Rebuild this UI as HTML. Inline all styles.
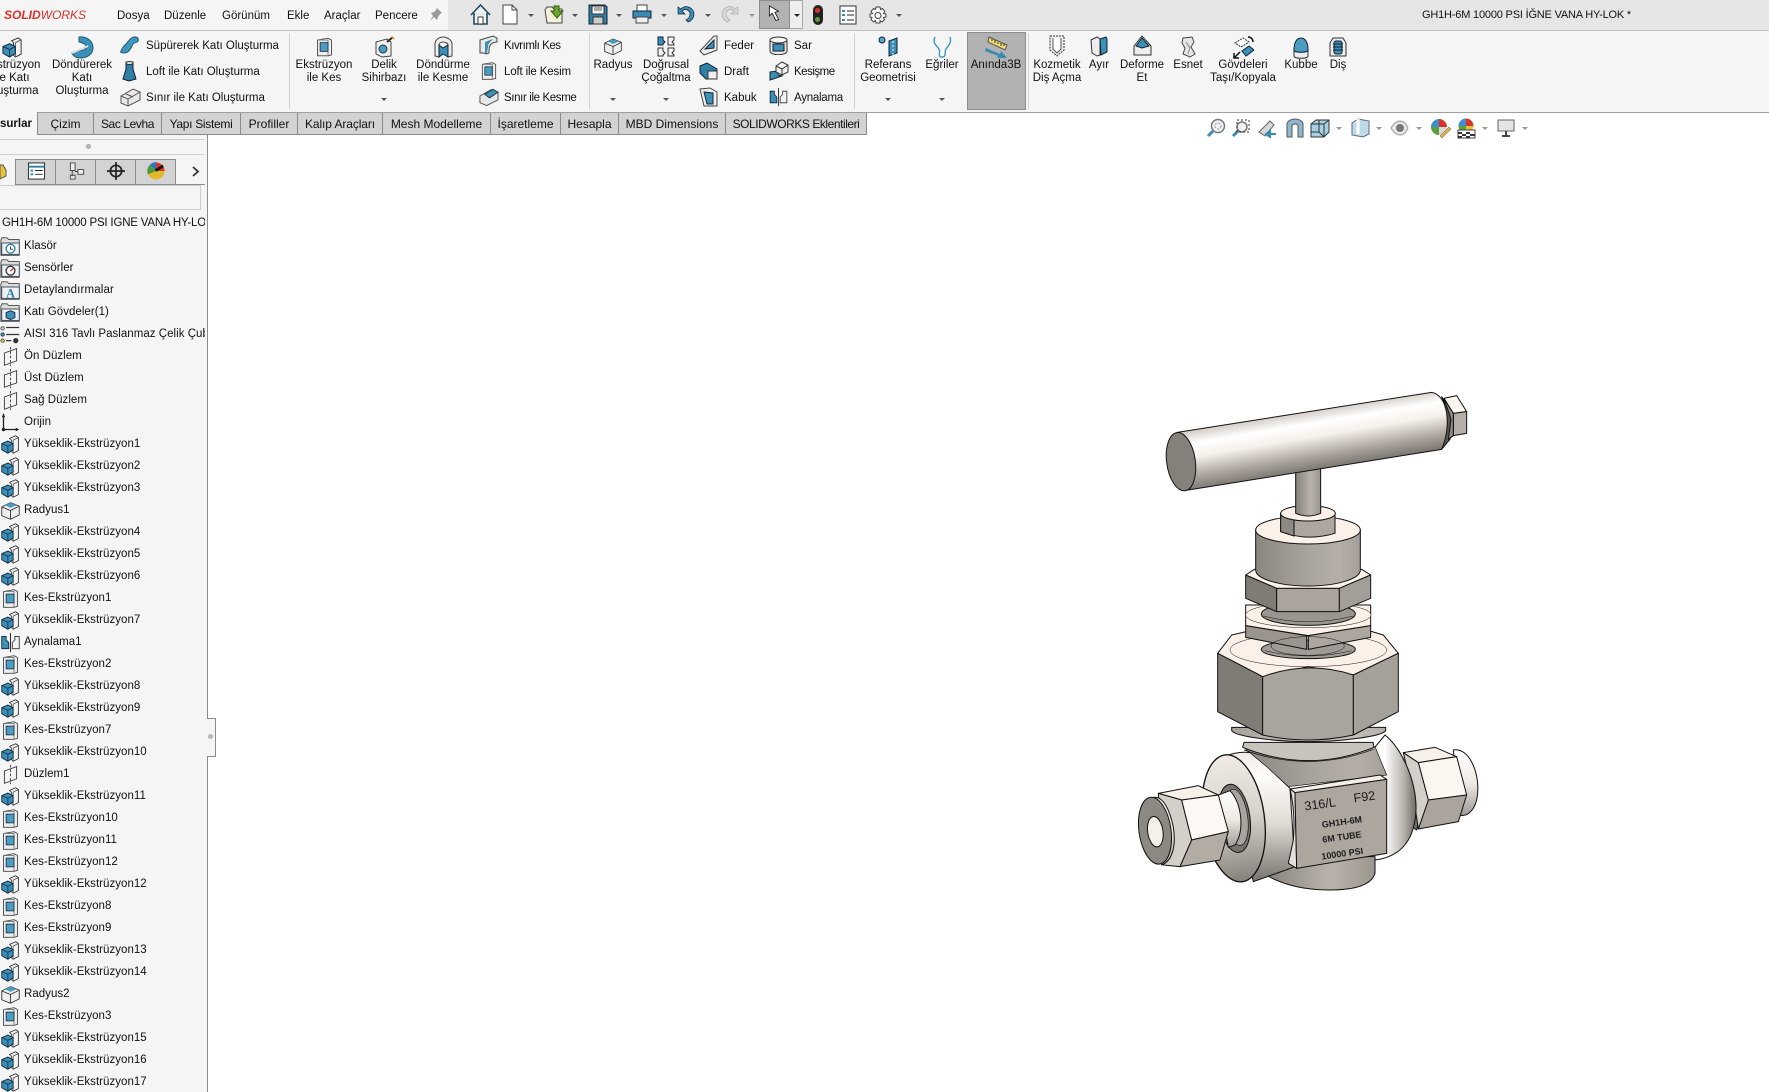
<!DOCTYPE html>
<html lang="tr"><head><meta charset="utf-8"><title>SOLIDWORKS</title>
<style>
html,body{margin:0;padding:0;background:#fff}
#p{position:relative;width:1769px;height:1092px;overflow:hidden;background:#fff;font:11.5px/13px "Liberation Sans",sans-serif;color:#111}
#p div,#p svg.a{position:absolute}
.c{transform:translateX(-50%);text-align:center;white-space:nowrap;margin-top:1px}
.l{white-space:nowrap;margin-top:1px}
.s{width:1px;background:#d2d2d2;top:33px;height:76px}
.t{top:113px;height:21px;background:#d3d3d3;border-right:1px solid #8c8c8c;font-size:12px;line-height:23px;text-align:center;white-space:nowrap;box-sizing:content-box}
.ar{width:0;height:0;border-left:3px solid transparent;border-right:3px solid transparent;border-top:3px solid #555}
.arg{border-top-color:#999}
#tree{left:0;top:235px;width:205px;height:857px;overflow:hidden}
#tree p{margin:0;height:22px;line-height:22px;white-space:nowrap;display:flex;align-items:center;letter-spacing:.03px}
#tree svg{width:21px;height:21px;flex:none;margin-right:3px}
.k{top:159px;height:25px;background:#d3d3d3;border-right:1px solid #8c8c8c;width:39px}
</style></head><body>
<svg width="0" height="0" style="position:absolute"><defs>
<symbol id="boss" viewBox="0 0 24 24"><path d="M11 5l7-3 3 2v15l-6 3-2-2V7z" fill="#f2f2f2" stroke="#333"/><path d="M15 7l6-3M15 7v15" fill="none" stroke="#555"/><path d="M2 11l7-3 6 3v7l-6 4-7-4z" fill="#3c8fb6" stroke="#123"/><path d="M2 11l7 3 6-3M9 14v8" fill="none" stroke="#135"/></symbol>
<symbol id="cut" viewBox="0 0 24 24"><path d="M4 4l12-2 4 2v17l-4 1H4z" fill="#eee" stroke="#444"/><path d="M4 4h12v18" fill="none" stroke="#777"/><rect x="7" y="7" width="9" height="10" fill="#4a9cc0" stroke="#234"/></symbol>
<symbol id="plane" viewBox="0 0 24 24"><path d="M5 8l14-5v14L5 22z" fill="none" stroke="#333"/><path d="M12 1v22" fill="none" stroke="#333" stroke-dasharray="3 2"/></symbol>
<symbol id="fil" viewBox="0 0 24 24"><path d="M2 8l10-5 10 4v10l-10 5-10-4z" fill="#eee" stroke="#333"/><path d="M2 8l10 4 10-5M12 12v10" fill="none" stroke="#333"/><path d="M6 6l6-3 7 3-7 3z" fill="#4a9cc0"/></symbol>
<symbol id="mir" viewBox="0 0 24 24"><path d="M2 5h5v4l3 3v7H2z" fill="#3c8fb6" stroke="#123"/><path d="M22 5h-5v4l-3 3v7h8z" fill="#f2f2f2" stroke="#333"/><path d="M12 1v22" stroke="#111"/></symbol>
<symbol id="f" viewBox="0 0 24 24"><path d="M1 22V5l1-3h6l2 2h12v18z" fill="#dcdcdc" stroke="#444"/><rect x="2" y="8" width="20" height="13" fill="#eef2f5" stroke="#345"/></symbol>
<symbol id="arrowc" viewBox="0 0 24 24"><path d="M7 2l10 6 0 0-4 1 4 8-3 1-4-8-3 3z" fill="#fff" stroke="#222"/></symbol>
</defs></svg>
<div id="p">
<!-- title bar -->
<div style="left:0;top:0;width:1769px;height:30px;background:#e6e6e6"></div>
<div style="left:0;top:0;width:448px;height:30px;background:#f5f5f5"></div>
<div style="left:0;top:30px;width:1769px;height:1px;background:#c4c4c4"></div>
<div class="l" style="left:4px;top:7px;font:italic 12px/14px 'Liberation Sans',sans-serif;color:#d8322a"><b>SOLID</b>WORKS</div>
<div class="l" style="left:117px;top:9px">Dosya</div><div class="l" style="left:164px;top:9px">Düzenle</div><div class="l" style="left:222px;top:9px">Görünüm</div><div class="l" style="left:287px;top:9px">Ekle</div><div class="l" style="left:324px;top:9px">Araçlar</div><div class="l" style="left:375px;top:9px">Pencere</div>
<svg class="a" style="left:428px;top:7px" width="15" height="15" viewBox="0 0 15 15"><path d="M9 1l5 5-2 1-2 3-1 3-3-3-4 4 3-5-2-3 3-1 2-2z" fill="#9a9a9a"/></svg>
<svg class="a" style="left:470px;top:3px" width="21" height="23" viewBox="0 0 21 23"><path d="M1 12L10.500 2 20 12M4 10v11h13V10" fill="#eef3f6" stroke="#1c4a60" stroke-width="1.600"/><rect x="8" y="14" width="5" height="7" fill="#fff" stroke="#333"/></svg>
<svg class="a" style="left:502px;top:4px" width="16" height="21" viewBox="0 0 16 21"><path d="M1 1h9l5 5v14H1z" fill="#fff" stroke="#444"/><path d="M10 1v5h5" fill="none" stroke="#444"/></svg>
<div class="ar" style="left:528px;top:14px"></div>
<svg class="a" style="left:544px;top:4px" width="21" height="21" viewBox="0 0 21 21"><path d="M1 6l2-3h5l2 2h8v14H3z" fill="#f4f0dc" stroke="#444"/><path d="M10 2h5v5h4l-6 7-6-7h3z" fill="#6aa52d" stroke="#2e5a10"/></svg>
<div class="ar" style="left:572px;top:14px"></div>
<svg class="a" style="left:588px;top:4px" width="20" height="21" viewBox="0 0 20 21"><path d="M1 1h16l2 2v17H1z" fill="#2f7fa6" stroke="#123"/><rect x="4" y="2" width="12" height="8" fill="#f4f4f4" stroke="#333"/><path d="M6 4h8M6 6h8" stroke="#666"/><rect x="5" y="13" width="10" height="7" fill="#ccc" stroke="#333"/></svg>
<div class="ar" style="left:616px;top:14px"></div>
<svg class="a" style="left:632px;top:4px" width="20" height="20" viewBox="0 0 20 20"><rect x="5" y="1" width="10" height="6" fill="#fff" stroke="#444"/><rect x="1" y="7" width="18" height="7" fill="#3a8cb4" stroke="#123"/><rect x="4" y="13" width="12" height="6" fill="#eee" stroke="#444"/></svg>
<div class="ar" style="left:661px;top:14px"></div>
<svg class="a" style="left:677px;top:5px" width="18" height="18" viewBox="0 0 18 18"><path d="M1 2v7h7L5 6c3-3 8-1 8 3 0 3-2 5-4 6l2 2c4-1 6-5 6-8 0-6-8-10-13-5z" fill="#3a8cb4" stroke="#123" stroke-width=".7"/></svg>
<div class="ar" style="left:705px;top:14px"></div>
<svg class="a" style="left:721px;top:5px;transform:scaleX(-1)" width="18" height="18" viewBox="0 0 18 18"><path d="M1 2v7h7L5 6c3-3 8-1 8 3 0 3-2 5-4 6l2 2c4-1 6-5 6-8 0-6-8-10-13-5z" fill="#d8d8d8" stroke="#aaa" stroke-width=".7"/></svg>
<div class="ar arg" style="left:749px;top:14px"></div>
<div style="left:759px;top:0;width:31px;height:29px;background:#b2b2b2;border:1px solid #8c8c8c;box-sizing:border-box"></div>
<div style="left:790px;top:0;width:13px;height:29px;background:#eee;border:1px solid #a8a8a8;border-left:0;box-sizing:border-box"></div>
<svg class="a" style="left:763px;top:3px" width="22" height="24" viewBox="0 0 24 24"><use href="#arrowc"/></svg>
<div class="ar" style="left:794px;top:14px;border-top-color:#222"></div>
<div style="left:813px;top:5px;width:10px;height:20px;border-radius:5px;background:#222"></div><div style="left:815px;top:8px;width:5px;height:5px;border-radius:3px;background:#d8342c"></div><div style="left:815px;top:17px;width:5px;height:5px;border-radius:3px;background:#5aa03a"></div>
<svg class="a" style="left:839px;top:5px" width="18" height="20" viewBox="0 0 18 20"><rect x="1" y="1" width="16" height="18" fill="#fff" stroke="#333"/><path d="M3 5h3v2H3zM3 9h3v2H3zM3 14h3v2H3z" fill="#3a8cb4"/><path d="M8 6h7M8 10h7M8 15h7" stroke="#222"/></svg>
<svg class="a" style="left:869px;top:6px" width="18" height="18" viewBox="0 0 18 18"><path d="M7 1h4l.5 2.500 2-1 2.500 3-1.500 2L17 8v3l-2.500.5 1 2-2.500 2.500-2-1.500L11 17H7l-.5-2.500-2 1.500L2 13.500l1-2L1 11V8l2.500-.5L2 5.500 4.500 2.500l2 1z" fill="#f5f5f5" stroke="#444"/><circle cx="9" cy="9.500" r="3" fill="#fff" stroke="#444"/></svg>
<div class="ar" style="left:896px;top:14px"></div>
<div class="l" style="left:1422px;top:8px;font-size:11px;letter-spacing:-.19px">GH1H-6M 10000 PSI İĞNE VANA HY-LOK *</div>
<!-- ribbon -->
<div style="left:0;top:31px;width:1769px;height:81px;background:#f5f5f5"></div>
<div style="left:0;top:112px;width:1769px;height:1px;background:#a0a0a0"></div>
<div class="s" style="left:289px"></div><div class="s" style="left:589px"></div><div class="s" style="left:854px"></div><div class="s" style="left:1028px"></div>
<div style="left:967px;top:32px;width:59px;height:78px;background:#b2b2b2;border:1px solid #8c8c8c;box-sizing:border-box"></div>
<svg class="a" style="left:1px;top:36px" width="23" height="23" viewBox="0 0 24 24"><use href="#boss"/></svg>
<div class="c" style="left:12px;top:58px">Ekstrüzyon<br>ile Katı<br>Oluşturma</div>
<svg class="a" style="left:71px;top:35px" width="23" height="24" viewBox="0 0 23 24"><path d="M8 2c8-1 14 4 14 11 0 6-6 10-12 10-5 0-8-2-9-5l9-3c3 1 5-1 5-3 0-3-3-4-7-5z" fill="#3c8fb6" stroke="#1c5a78"/><path d="M1 18l16-7" stroke="#ddd" stroke-width="2"/></svg>
<div class="c" style="left:82px;top:58px">Döndürerek<br>Katı<br>Oluşturma</div>
<svg class="a" style="left:119px;top:35px" width="21" height="20" viewBox="0 0 21 20"><path d="M2 16c2-5 4-6 6-8 2-3 5-7 9-6 3 1 3 4 1 5-3 1-4 1-5 4-2 4-4 7-8 7-3 0-4-1-3-2z" fill="#3f97bf" stroke="#1c5a78"/></svg>
<svg class="a" style="left:122px;top:61px" width="15" height="21" viewBox="0 0 15 21"><path d="M4 1h7l0 7 3 10-7 2-6-2 3-10z" fill="#2f7fa6" stroke="#123"/><ellipse cx="7.500" cy="2" rx="3.500" ry="1.500" fill="#eee" stroke="#333"/></svg>
<svg class="a" style="left:120px;top:87px" width="21" height="20" viewBox="0 0 21 20"><path d="M1 9l12-7 7 3v8L8 19l-7-3z" fill="#e8e8e8" stroke="#555"/><path d="M1 9l7 3 12-7M8 12v7M6 7l7 3" fill="none" stroke="#555"/></svg>
<div class="l" style="left:146px;top:39px">Süpürerek Katı Oluşturma</div><div class="l" style="left:146px;top:65px">Loft ile Katı Oluşturma</div><div class="l" style="left:146px;top:91px">Sınır ile Katı Oluşturma</div>
<svg class="a" style="left:314px;top:36px" width="21" height="22" viewBox="0 0 24 24"><use href="#cut"/></svg>
<div class="c" style="left:324px;top:58px">Ekstrüzyon<br>ile Kes</div>
<svg class="a" style="left:373px;top:36px" width="22" height="22" viewBox="0 0 22 22"><path d="M3 6l11-3 4 3v14l-9 1-6-3z" fill="#f0f0f0" stroke="#444"/><circle cx="10" cy="13" r="4" fill="#4a9cc0" stroke="#234"/><path d="M14 6l6-5" stroke="#222" stroke-width="2"/><path d="M19 1l2 2" stroke="#e0a020" stroke-width="2"/></svg>
<div class="c" style="left:384px;top:58px">Delik<br>Sihirbazı</div>
<div class="ar" style="left:381px;top:98px"></div>
<svg class="a" style="left:433px;top:36px" width="21" height="22" viewBox="0 0 21 22"><path d="M2 20V8c0-4 4-7 8-7s9 3 9 7v12l-4 1V9c0-2-3-3-5-3S6 7 6 9v12z" fill="#eee" stroke="#444"/><path d="M6 9l4 3 5-3v12l-5-3-4 3z" fill="#3c8fb6" stroke="#123"/></svg>
<div class="c" style="left:443px;top:58px">Döndürme<br>ile Kesme</div>
<svg class="a" style="left:479px;top:35px" width="20" height="20" viewBox="0 0 20 20"><path d="M1 18V5L14 1l4 2v4c-5 0-8 3-8 8v3l-3 1-2-1z" fill="#e8e8e8" stroke="#444"/><path d="M6 18V7l8-3c-3 3-5 5-5 8l-1 6z" fill="#3c8fb6"/></svg>
<svg class="a" style="left:479px;top:61px" width="20" height="20" viewBox="0 0 24 24"><use href="#cut"/></svg>
<svg class="a" style="left:479px;top:87px" width="20" height="20" viewBox="0 0 21 20"><path d="M1 9l12-7 7 3v8L8 19l-7-3z" fill="#e8e8e8" stroke="#555"/><path d="M6 7l9-5 5 3-9 6z" fill="#3c8fb6" stroke="#234"/></svg>
<div class="l" style="left:504px;top:39px;letter-spacing:-.45px">Kıvrımlı Kes</div><div class="l" style="left:504px;top:65px;letter-spacing:-.15px">Loft ile Kesim</div><div class="l" style="left:504px;top:91px;letter-spacing:-.37px">Sınır ile Kesme</div>
<svg class="a" style="left:603px;top:36px" width="20" height="21" viewBox="0 0 24 24"><use href="#fil"/></svg>
<div class="c" style="left:613px;top:58px">Radyus</div><div class="ar" style="left:610px;top:98px"></div>
<svg class="a" style="left:657px;top:36px" width="19" height="21" viewBox="0 0 19 21"><path d="M1 1h5v3l2 2-2 2v1H1z" fill="#3c8fb6" stroke="#123"/><path d="M11 1h6v3l-2 2 2 2v1h-6zM1 12h5v3l2 2-2 2v1H1zM11 12h6v3l-2 2 2 2v1h-6z" fill="#f4f4f4" stroke="#333"/></svg>
<div class="c" style="left:666px;top:58px">Doğrusal<br>Çoğaltma</div><div class="ar" style="left:663px;top:98px"></div>
<svg class="a" style="left:699px;top:35px" width="19" height="21" viewBox="0 0 19 21"><path d="M1 16L15 1h3v14L5 20z" fill="#eee" stroke="#444"/><path d="M6 14l9-9v8z" fill="#3c8fb6" stroke="#123"/></svg>
<svg class="a" style="left:699px;top:61px" width="19" height="20" viewBox="0 0 19 20"><path d="M1 5l7-3 10 6v10H7L1 12z" fill="#2f7fa6" stroke="#123"/><rect x="9" y="10" width="9" height="8" fill="#eee" stroke="#333"/></svg>
<svg class="a" style="left:699px;top:87px" width="19" height="20" viewBox="0 0 19 20"><path d="M1 2l10-1 7 4v14H5z" fill="#eee" stroke="#444"/><path d="M5 5l9 1v11H8z" fill="#3c8fb6" stroke="#123"/></svg>
<div class="l" style="left:724px;top:39px">Feder</div><div class="l" style="left:724px;top:65px">Draft</div><div class="l" style="left:724px;top:91px">Kabuk</div>
<svg class="a" style="left:769px;top:36px" width="19" height="19" viewBox="0 0 19 19"><path d="M1 4v11c0 5 17 5 17 0V4z" fill="#e8e8e8" stroke="#333"/><ellipse cx="9.500" cy="4" rx="8.500" ry="3" fill="#f6f6f6" stroke="#333"/><rect x="4" y="8" width="11" height="7" fill="#3c8fb6" stroke="#123"/></svg>
<svg class="a" style="left:769px;top:61px" width="20" height="20" viewBox="0 0 20 20"><path d="M1 11l8-1v4l4 1-12 4z" fill="#3c8fb6" stroke="#123"/><path d="M7 5l6-4 6 3v7l-6 3-6-3z" fill="#f2f2f2" stroke="#333"/><path d="M7 5l6 3 6-4M13 8v6" fill="none" stroke="#333"/></svg>
<svg class="a" style="left:768px;top:87px" width="21" height="20" viewBox="0 0 24 24"><use href="#mir"/></svg>
<div class="l" style="left:794px;top:39px">Sar</div><div class="l" style="left:794px;top:65px;letter-spacing:-.5px">Kesişme</div><div class="l" style="left:794px;top:91px;letter-spacing:-.25px">Aynalama</div>
<svg class="a" style="left:878px;top:36px" width="21" height="22" viewBox="0 0 21 22"><circle cx="4" cy="4" r="3" fill="#5aa8cc" stroke="#123"/><path d="M11 5l8-3v15l-8 3z" fill="#3c8fb6" stroke="#123"/><path d="M15 1v21" stroke="#fff" stroke-dasharray="2 2"/></svg>
<div class="c" style="left:888px;top:58px">Referans<br>Geometrisi</div><div class="ar" style="left:885px;top:98px"></div>
<svg class="a" style="left:932px;top:36px" width="21" height="22" viewBox="0 0 21 22"><path d="M3 1c-3 6 2 9 4 12s-2 8 3 8 2-5 4-8 6-6 4-12" fill="none" stroke="#3f97bf" stroke-width="1.400"/></svg>
<div class="c" style="left:942px;top:58px">Eğriler</div><div class="ar" style="left:939px;top:98px"></div>
<svg class="a" style="left:985px;top:36px" width="23" height="23" viewBox="0 0 23 23"><path d="M4 1l18 8-2 5L3 6z" fill="#f2dc6a" stroke="#555"/><path d="M7 3v2M10 4v3M13 6v2M16 7v3M19 8v2" stroke="#333"/><path d="M1 12l14 6 1-3 6 7-10 0 1-2-13-5z" fill="#3a8cb4"/></svg>
<div class="c" style="left:996px;top:58px">Anında3B</div>
<svg class="a" style="left:1048px;top:35px" width="18" height="22" viewBox="0 0 18 22"><path d="M2 1h14v14l-7 6-7-6z" fill="#eee" stroke="#333" stroke-dasharray="2 1"/><path d="M5 3v11l4 4 4-4V3" fill="#fff" stroke="#555"/></svg>
<div class="c" style="left:1057px;top:58px">Kozmetik<br>Diş Açma</div>
<svg class="a" style="left:1090px;top:36px" width="18" height="21" viewBox="0 0 18 21"><path d="M1 4l6-3 3 2v16l-3 1-5-3z" fill="#eee" stroke="#333"/><path d="M10 3l6-2 1 2v13l-6 3z" fill="#3c8fb6" stroke="#123"/></svg>
<div class="c" style="left:1099px;top:58px">Ayır</div>
<svg class="a" style="left:1133px;top:35px" width="19" height="22" viewBox="0 0 19 22"><path d="M1 11l8-10 9 10v9H1z" fill="#eee" stroke="#333"/><path d="M3 11l6-8 7 8-7 2z" fill="#3c8fb6" stroke="#123"/></svg>
<div class="c" style="left:1142px;top:58px">Deforme<br>Et</div>
<svg class="a" style="left:1180px;top:36px" width="16" height="22" viewBox="0 0 16 22"><path d="M3 2l9-1 2 5-3 5 4 7-5 3-7-3 2-6-3-5z" fill="#e6e6e6" stroke="#444"/><path d="M6 6l4 6-2 6" fill="none" stroke="#888"/></svg>
<div class="c" style="left:1188px;top:58px">Esnet</div>
<svg class="a" style="left:1232px;top:35px" width="22" height="24" viewBox="0 0 22 24"><path d="M3 8l8-5 6 4-8 5z" fill="#fff" stroke="#333" stroke-dasharray="2 1"/><path d="M10 16l7-5 5 4-8 6z" fill="#3c8fb6" stroke="#123"/><path d="M2 23l6-6M2 18v5h5M16 2c3 0 5 2 5 5" fill="none" stroke="#111" stroke-width="1.500"/></svg>
<div class="c" style="left:1243px;top:58px">Gövdeleri<br>Taşı/Kopyala</div>
<svg class="a" style="left:1293px;top:37px" width="16" height="22" viewBox="0 0 16 22"><path d="M1 12v7c0 3 14 3 14 0v-7z" fill="#eee" stroke="#333"/><path d="M1 13C1 5 4 1 8 1s7 4 7 12c0 3-14 3-14 0z" fill="#4a9cc0" stroke="#123"/></svg>
<div class="c" style="left:1301px;top:58px">Kubbe</div>
<svg class="a" style="left:1329px;top:37px" width="18" height="20" viewBox="0 0 18 20"><path d="M1 6l3-5h10l3 5v13H1z" fill="#eee" stroke="#333"/><rect x="5" y="4" width="8" height="13" rx="2" fill="#3c8fb6" stroke="#123"/><path d="M4 7h10M4 10h10M4 13h10" stroke="#123"/></svg>
<div class="c" style="left:1338px;top:58px">Diş</div>
<!-- tabs -->
<div class="t" style="left:0;width:37px;background:#f5f5f5;top:112px;height:23px;line-height:24px;text-align:right;overflow:hidden;font-weight:bold;font-size:11.5px;padding:0;border-right:1px solid #8c8c8c"><span style="margin-right:8px">surlar</span></div>
<div class="t" style="left:38px;width:55px">Çizim</div><div class="t" style="left:94px;width:67px;letter-spacing:-.4px">Sac Levha</div><div class="t" style="left:162px;width:78px;letter-spacing:-.3px">Yapı Sistemi</div><div class="t" style="left:241px;width:56px">Profiller</div><div class="t" style="left:298px;width:84px;letter-spacing:-.1px">Kalıp Araçları</div><div class="t" style="left:383px;width:107px">Mesh Modelleme</div><div class="t" style="left:491px;width:69px">İşaretleme</div><div class="t" style="left:561px;width:57px">Hesapla</div><div class="t" style="left:619px;width:106px">MBD Dimensions</div><div class="t" style="left:726px;width:140px;letter-spacing:-.45px">SOLIDWORKS Eklentileri</div>
<div style="left:38px;top:134px;width:829px;height:1px;background:#8c8c8c"></div>
<!-- heads-up -->
<svg class="a" style="left:1206px;top:118px" width="20" height="20" viewBox="0 0 20 20"><circle cx="12" cy="8" r="6.500" fill="#eef2f4" stroke="#777" stroke-width="1.500"/><path d="M7 13l-5 5" stroke="#3a8cb4" stroke-width="3"/><circle cx="12" cy="8" r="3" fill="none" stroke="#999" stroke-dasharray="2 1.500"/></svg>
<svg class="a" style="left:1231px;top:118px" width="20" height="20" viewBox="0 0 20 20"><circle cx="11" cy="9" r="5" fill="#eef2f4" stroke="#777" stroke-width="1.500"/><path d="M7 13l-5 5" stroke="#3a8cb4" stroke-width="3"/><rect x="6" y="2" width="12" height="12" fill="none" stroke="#333" stroke-dasharray="2 2"/></svg>
<svg class="a" style="left:1257px;top:118px" width="20" height="20" viewBox="0 0 20 20"><path d="M2 14L13 3l4 4-9 11z" fill="#d8d8d8" stroke="#666"/><path d="M9 16h10M9 16l4-3v6z" fill="#3a8cb4" stroke="#3a8cb4" stroke-width="2"/></svg>
<svg class="a" style="left:1285px;top:118px" width="20" height="20" viewBox="0 0 20 20"><path d="M2 19V6c0-3 4-5 8-5s8 2 8 5v13h-5V8c0-1-1-2-3-2S7 7 7 8v11z" fill="#8fb6cc" stroke="#555"/></svg>
<svg class="a" style="left:1310px;top:118px" width="20" height="20" viewBox="0 0 20 20"><path d="M1 6l5-4h13v12l-5 5H1z" fill="#a6d0e4" stroke="#333"/><path d="M1 6h13v13M14 6l5-4M9 2v12H1M9 14l5 5" fill="none" stroke="#333"/></svg>
<div class="ar arg" style="left:1336px;top:127px"></div>
<svg class="a" style="left:1351px;top:118px" width="19" height="20" viewBox="0 0 19 20"><path d="M1 5l6-4 11 2v13l-6 3-11-2z" fill="#bcdcec" stroke="#667"/><path d="M7 1v15" stroke="#fff" stroke-width="3"/></svg>
<div class="ar arg" style="left:1376px;top:127px"></div>
<svg class="a" style="left:1390px;top:119px" width="19" height="18" viewBox="0 0 19 18"><path d="M1 9c3-5 6-7 9-7s6 2 8 7c-2 5-5 7-8 7s-6-2-9-7z" fill="#e6e6e6" stroke="#999"/><circle cx="10" cy="9" r="4" fill="#777"/></svg>
<div class="ar arg" style="left:1416px;top:127px"></div>
<svg class="a" style="left:1430px;top:118px" width="21" height="21" viewBox="0 0 21 21"><circle cx="9" cy="9" r="8" fill="#d8d8d8"/><path d="M9 9V1a8 8 0 0 0-8 8z" fill="#3f8fcf"/><path d="M9 9V1a8 8 0 0 1 8 8z" fill="#d8342c"/><path d="M9 9H1a8 8 0 0 0 8 8z" fill="#5aa03a"/><path d="M10 18l9-9 2 2-9 9z" fill="#e0b040" stroke="#555" stroke-width=".5"/></svg>
<svg class="a" style="left:1456px;top:118px" width="21" height="21" viewBox="0 0 21 21"><circle cx="10" cy="8" r="7.500" fill="#e0c040"/><path d="M10 8V.5A7.500 7.500 0 0 0 2.500 8z" fill="#3f8fcf"/><path d="M10 8V.5A7.500 7.500 0 0 1 17.500 8z" fill="#d8342c"/><path d="M10 8H2.500A7.500 7.500 0 0 0 10 15.500z" fill="#5aa03a"/><rect x="2" y="12" width="17" height="8" fill="#fff" stroke="#444"/><path d="M2 14h4v2H2zM10 14h4v2h-4zM6 16h4v2H6zM14 16h5v2h-5zM2 18h4v2H2zM10 18h4v2h-4z" fill="#333"/></svg>
<div class="ar arg" style="left:1482px;top:127px"></div>
<svg class="a" style="left:1497px;top:119px" width="18" height="18" viewBox="0 0 18 18"><rect x="1" y="1" width="16" height="11" fill="#e4e4e4" stroke="#666"/><path d="M9 12v4M5 17h8" stroke="#444" stroke-width="2"/></svg>
<div class="ar arg" style="left:1522px;top:127px"></div>
<!-- panel -->
<div style="left:0;top:135px;width:207px;height:957px;background:#f5f5f5;border-right:1px solid #8c8c8c"></div>
<div style="left:0;top:139px;width:205px;height:1px;background:#cfcfcf"></div>
<div style="left:86px;top:144px;width:5px;height:5px;border-radius:3px;background:#b8b8b8;border:1px solid #aaa;box-sizing:border-box"></div>
<div style="left:0;top:154px;width:205px;height:1px;background:#d0d0d0"></div>
<div style="left:0;top:184px;width:205px;height:1px;background:#8c8c8c"></div>
<div style="left:16px;top:159px;width:160px;height:1px;background:#8c8c8c;z-index:2"></div>
<div style="left:0;top:159px;width:15px;height:26px;background:#f5f5f5;border-right:1px solid #8c8c8c"></div>
<svg class="a" style="left:0;top:162px" width="7" height="18" viewBox="0 0 7 18"><path d="M0 3h3l3 5v6l-6 3z" fill="#e8c23c" stroke="#555"/></svg>
<div class="k" style="left:16px"></div><div class="k" style="left:56px"></div><div class="k" style="left:96px"></div><div class="k" style="left:136px"></div>
<svg class="a" style="left:27px;top:162px" width="19" height="18" viewBox="0 0 19 19"><rect x="1" y="1" width="17" height="17" fill="#fff" stroke="#222"/><path d="M1 5h17" stroke="#2f7fa6" stroke-width="2"/><path d="M3 8h3v2H3zM3 12h3v2H3z" fill="#3a8cb4"/><path d="M8 9h8M8 13h8" stroke="#222"/></svg>
<svg class="a" style="left:68px;top:162px" width="17" height="18" viewBox="0 0 17 19"><path d="M2 1h5v8H2zM10 8h6v5h-6zM2 14h5v4H2z" fill="#eee" stroke="#444"/><path d="M4 9v6M7 10h3" stroke="#444"/></svg>
<svg class="a" style="left:107px;top:162px" width="18" height="18" viewBox="0 0 19 19"><circle cx="9.500" cy="9.500" r="6" fill="none" stroke="#222" stroke-width="1.800"/><path d="M9.500 0v19M0 9.500h19" stroke="#222" stroke-width="1.800"/></svg>
<svg class="a" style="left:147px;top:162px" width="18" height="18" viewBox="0 0 19 19"><circle cx="9.500" cy="9.500" r="9" fill="#e2b82c"/><path d="M9.500 9.500L3 3a9 9 0 0 1 6.500-3z" fill="#2e78c8"/><path d="M9.500 9.500V.5a9 9 0 0 1 9 9z" fill="#d8342c"/><path d="M9.500 9.500L3 3a9 9 0 0 0-2 10z" fill="#4a9a36"/><path d="M9 9l8-5" stroke="#111" stroke-width="3"/></svg>
<svg class="a" style="left:191px;top:166px" width="9" height="11" viewBox="0 0 9 11"><path d="M2 1l5 4.500L2 10" fill="none" stroke="#333" stroke-width="1.800"/></svg>
<div style="left:0;top:185px;width:201px;height:25px;background:#f5f5f5;border:1px solid #cdcdcd;border-left:0;box-sizing:border-box"></div>
<div class="l" style="left:2px;top:216px;width:203px;overflow:hidden;font-size:11.5px;letter-spacing:-.19px">GH1H-6M 10000 PSI İĞNE VANA HY-LOK</div>
<div style="left:207px;top:718px;width:9px;height:39px;background:#f5f5f5;border:1px solid #8c8c8c;border-left:0;box-sizing:border-box"></div>
<div style="left:208px;top:734px;width:5px;height:5px;border-radius:3px;background:#b8b8b8"></div>
<div id="tree">
<p><svg viewBox="0 0 24 24"><use href="#f"/><circle cx="12" cy="14.500" r="5" fill="#fff" stroke="#2f7fa6" stroke-width="1.500"/><path d="M12 12v3h3" fill="none" stroke="#333"/></svg>Klasör</p>
<p><svg viewBox="0 0 24 24"><use href="#f"/><circle cx="12" cy="14.500" r="5" fill="#fff" stroke="#333" stroke-width="1.500"/><path d="M12 15l3-3" stroke="#c33" stroke-width="1.500"/></svg>Sensörler</p>
<p><svg viewBox="0 0 24 24"><use href="#f"/><text x="12" y="20" font-family="Liberation Serif,serif" font-size="14" font-weight="bold" fill="#2f7fa6" text-anchor="middle">A</text></svg><span style="letter-spacing:.15px">Detaylandırmalar</span></p>
<p><svg viewBox="0 0 24 24"><use href="#f"/><path d="M7 12l5-2 5 2v6l-5 2-5-2z" fill="#3c8fb6" stroke="#123"/></svg>Katı Gövdeler(1)</p>
<p><svg viewBox="0 0 24 24"><circle cx="3" cy="5" r="2" fill="#bcd" stroke="#555"/><circle cx="3" cy="12" r="2" fill="#3a8cb4" stroke="#345"/><circle cx="3" cy="19" r="2" fill="#e6c23c" stroke="#555"/><path d="M7 4h15M7 12h15M7 19h6" stroke="#333" stroke-width="1.500"/><circle cx="18" cy="19" r="3" fill="#333"/></svg>AISI 316 Tavlı Paslanmaz Çelik Çubuk</p>
<p><svg viewBox="0 0 24 24"><use href="#plane"/></svg>Ön Düzlem</p>
<p><svg viewBox="0 0 24 24"><use href="#plane"/></svg>Üst Düzlem</p>
<p><svg viewBox="0 0 24 24"><use href="#plane"/></svg>Sağ Düzlem</p>
<p><svg viewBox="0 0 24 24"><path d="M4 2v18h17" fill="none" stroke="#222" stroke-width="1.500"/><path d="M2 6l2-4 2 4zM18 18l4 2-4 2z" fill="#222"/><circle cx="4" cy="20" r="2" fill="#222"/></svg>Orijin</p>
<p><svg viewBox="0 0 24 24"><use href="#boss"/></svg>Yükseklik-Ekstrüzyon1</p>
<p><svg viewBox="0 0 24 24"><use href="#boss"/></svg>Yükseklik-Ekstrüzyon2</p>
<p><svg viewBox="0 0 24 24"><use href="#boss"/></svg>Yükseklik-Ekstrüzyon3</p>
<p><svg viewBox="0 0 24 24"><use href="#fil"/></svg>Radyus1</p>
<p><svg viewBox="0 0 24 24"><use href="#boss"/></svg>Yükseklik-Ekstrüzyon4</p>
<p><svg viewBox="0 0 24 24"><use href="#boss"/></svg>Yükseklik-Ekstrüzyon5</p>
<p><svg viewBox="0 0 24 24"><use href="#boss"/></svg>Yükseklik-Ekstrüzyon6</p>
<p><svg viewBox="0 0 24 24"><use href="#cut"/></svg>Kes-Ekstrüzyon1</p>
<p><svg viewBox="0 0 24 24"><use href="#boss"/></svg>Yükseklik-Ekstrüzyon7</p>
<p><svg viewBox="0 0 24 24"><use href="#mir"/></svg>Aynalama1</p>
<p><svg viewBox="0 0 24 24"><use href="#cut"/></svg>Kes-Ekstrüzyon2</p>
<p><svg viewBox="0 0 24 24"><use href="#boss"/></svg>Yükseklik-Ekstrüzyon8</p>
<p><svg viewBox="0 0 24 24"><use href="#boss"/></svg>Yükseklik-Ekstrüzyon9</p>
<p><svg viewBox="0 0 24 24"><use href="#cut"/></svg>Kes-Ekstrüzyon7</p>
<p><svg viewBox="0 0 24 24"><use href="#boss"/></svg>Yükseklik-Ekstrüzyon10</p>
<p><svg viewBox="0 0 24 24"><use href="#plane"/></svg>Düzlem1</p>
<p><svg viewBox="0 0 24 24"><use href="#boss"/></svg>Yükseklik-Ekstrüzyon11</p>
<p><svg viewBox="0 0 24 24"><use href="#cut"/></svg>Kes-Ekstrüzyon10</p>
<p><svg viewBox="0 0 24 24"><use href="#cut"/></svg>Kes-Ekstrüzyon11</p>
<p><svg viewBox="0 0 24 24"><use href="#cut"/></svg>Kes-Ekstrüzyon12</p>
<p><svg viewBox="0 0 24 24"><use href="#boss"/></svg>Yükseklik-Ekstrüzyon12</p>
<p><svg viewBox="0 0 24 24"><use href="#cut"/></svg>Kes-Ekstrüzyon8</p>
<p><svg viewBox="0 0 24 24"><use href="#cut"/></svg>Kes-Ekstrüzyon9</p>
<p><svg viewBox="0 0 24 24"><use href="#boss"/></svg>Yükseklik-Ekstrüzyon13</p>
<p><svg viewBox="0 0 24 24"><use href="#boss"/></svg>Yükseklik-Ekstrüzyon14</p>
<p><svg viewBox="0 0 24 24"><use href="#fil"/></svg>Radyus2</p>
<p><svg viewBox="0 0 24 24"><use href="#cut"/></svg>Kes-Ekstrüzyon3</p>
<p><svg viewBox="0 0 24 24"><use href="#boss"/></svg>Yükseklik-Ekstrüzyon15</p>
<p><svg viewBox="0 0 24 24"><use href="#boss"/></svg>Yükseklik-Ekstrüzyon16</p>
<p><svg viewBox="0 0 24 24"><use href="#boss"/></svg>Yükseklik-Ekstrüzyon17</p>
</div>
<!-- valve -->
<svg class="a" style="left:0;top:0" width="1769" height="1092" viewBox="0 0 1769 1092">
<defs>
<linearGradient id="hg" gradientUnits="userSpaceOnUse" x1="555" y1="97" x2="585" y2="275"><stop offset="0" stop-color="#d6d0c9"/><stop offset=".2" stop-color="#fff"/><stop offset=".42" stop-color="#f6f1eb"/><stop offset=".75" stop-color="#aaa49d"/><stop offset="1" stop-color="#76726c"/></linearGradient>
<linearGradient id="st"><stop offset="0" stop-color="#85817b"/><stop offset=".6" stop-color="#b9b3ab"/><stop offset="1" stop-color="#9b968f"/></linearGradient>
<linearGradient id="cl"><stop offset="0" stop-color="#a5a099"/><stop offset=".55" stop-color="#d2cdc6"/><stop offset="1" stop-color="#b5afa8"/></linearGradient>
<linearGradient id="cp"><stop offset="0" stop-color="#8a8680"/><stop offset=".5" stop-color="#a9a49d"/><stop offset=".8" stop-color="#b5afa8"/><stop offset="1" stop-color="#a39e97"/></linearGradient>
<linearGradient id="bd" x1="0" y1="0" x2="0" y2="1"><stop offset="0" stop-color="#efeae4"/><stop offset=".18" stop-color="#fffdfb"/><stop offset=".55" stop-color="#e0dbd4"/><stop offset="1" stop-color="#77736d"/></linearGradient>
<linearGradient id="br" x1="0" y1="0" x2="1" y2="0"><stop offset="0" stop-color="#f2ede7"/><stop offset=".5" stop-color="#fff"/><stop offset=".8" stop-color="#bab4ad"/><stop offset="1" stop-color="#6f6b65"/></linearGradient>
<linearGradient id="ds" x1="0" y1="0" x2="0" y2="1"><stop offset="0" stop-color="#f0ebe5"/><stop offset=".5" stop-color="#d6d1ca"/><stop offset="1" stop-color="#85817b"/></linearGradient>
<linearGradient id="tb" x1="0" y1="0" x2="0" y2="1"><stop offset="0" stop-color="#fff"/><stop offset=".5" stop-color="#f0ebe5"/><stop offset="1" stop-color="#9d9891"/></linearGradient>
</defs>
<g transform="translate(1120 640) scale(.33333)" stroke="#111" stroke-width="3" stroke-linejoin="round">
<path d="M1000 330c50-10 85 80 70 150-10 40-35 50-50 45z" fill="url(#tb)"/>
<path d="M860 360l40 40 10 80-20 90-30-20z" fill="#77736d"/>
<path d="M850 338l95-16 65 28-115 18z" fill="#f7f1ea"/>
<path d="M895 368l115-18 30 115-115 15z" fill="#fbf6f0"/>
<path d="M925 480l115-15-25 80-120 22z" fill="#aaa49d"/>
<path d="M850 338l45 30 30 112-30 87-15-100z" fill="#d4cfc8"/>
<path d="M795 285c55 45 95 145 93 225-3 80-38 140-123 150H700V400z" fill="url(#br)"/>
<path d="M430 700q80 50 200 50t135-50v-50H500z" fill="url(#st)"/>
<path d="M310 350c40-15 70-15 90-10l110 105 15 235-125 45z" fill="url(#bd)"/>
<path d="M368 320l72 60 65 60 295-35-35-85z" fill="url(#cp)" stroke-width="2"/>
<ellipse cx="341" cy="535" rx="92" ry="192" transform="rotate(-8 341 535)" fill="url(#ds)" stroke-width="4"/>
<ellipse cx="343" cy="535" rx="47" ry="103" transform="rotate(-8 343 535)" fill="#77736d"/>
<ellipse cx="350" cy="532" rx="33" ry="85" transform="rotate(-8 350 532)" fill="#a9a49d" stroke-width="2"/>
<path d="M295 465l35-13c35 38 45 118 15 163l-20 7z" fill="url(#tb)"/>
<path d="M115 460l120-23 60 28-110 15z" fill="#f7f1ea"/>
<path d="M115 460l70 20 30 120-35 80-50-5z" fill="#d4cfc8"/>
<path d="M185 480l110-15 30 110-110 25z" fill="#fdf8f3"/>
<path d="M215 600l110-25-25 85-120 20z" fill="#b2aca5"/>
<path d="M100 472c30-5 50 40 60 90 8 50 0 100-35 113z" fill="url(#tb)"/>
<ellipse cx="105" cy="572" rx="48" ry="101" transform="rotate(-8 105 572)" fill="#8c8882"/>
<ellipse cx="106" cy="575" rx="23" ry="46" transform="rotate(-8 106 575)" fill="#f5f0ea"/>
<path d="M510 447l270-42 20 13-275 40z" fill="#f4efe9"/>
<path d="M510 447l15 11 5 227-25-15 15-70c5-60 0-110-10-153z" fill="#e5e0da"/>
<path d="M525 458l275-40v222l-270 45z" fill="#aca69f"/>
<g stroke="none" fill="#1c1c1c" font-family="Liberation Sans,sans-serif" text-anchor="middle">
<text x="602" y="505" font-size="38" transform="rotate(-8 602 505)">316/L</text>
<text x="735" y="483" font-size="38" transform="rotate(-8 735 483)">F92</text>
<text x="667" y="555" font-size="27" font-weight="bold" transform="rotate(-8 667 555)">GH1H-6M</text>
<text x="667" y="600" font-size="27" font-weight="bold" transform="rotate(-8 667 600)">6M TUBE</text>
<text x="668" y="650" font-size="27" font-weight="bold" transform="rotate(-8 668 650)">10000 PSI</text>
</g>
<path d="M368 322q197 80 394 0l-3-15H372z" fill="#c8c3bc"/>
<path d="M372 330q195 70 388-2" fill="none" stroke-width="2"/>
<path d="M335 262v10c10 18 135 33 230 33s220-15 232-33v-10z" fill="url(#cl)"/>
<path d="M293 40l42-55 65-15h340l50 15 45 55-135 65-135-25-137 30z" fill="#fbf1e9"/>
<ellipse cx="565" cy="30" rx="235" ry="50" fill="none" stroke-width="1.500"/>
<path d="M293 40l135 70v175L293 215z" fill="#7f7b75"/>
<path d="M428 110q137-50 272-5v180q-136 30-272 0z" fill="#a9a49d"/>
<path d="M700 105l135-65v175l-135 70z" fill="#a5a099"/>
</g>
<g transform="translate(1120 380) scale(.33333)" stroke="#111" stroke-width="3" stroke-linejoin="round">
<ellipse cx="565" cy="808" rx="141" ry="28" fill="#a09b94"/>
<path d="M435 812q130 32 260 0" fill="none" stroke-width="1.500"/>
<path d="M377 675h375v62l-187 30-188-30z" fill="#fbf1e9"/>
<ellipse cx="565" cy="705" rx="188" ry="38" fill="#fbf1e9" stroke-width="1.500"/>
<path d="M377 737l183 30v41l-183-36z" fill="#9a958e"/><path d="M565 767l187-30v35l-187 36z" fill="#aca69f"/>
<ellipse cx="563" cy="798" rx="110" ry="28" fill="none" stroke-width="1.500"/>
<ellipse cx="565" cy="702" rx="141" ry="34" fill="#9a958e"/>
<path d="M430 708q135 35 270 0" fill="none" stroke-width="1.500"/>
<path d="M377 585l26-17h322l27 17-94 40H470z" fill="#fbf1e9"/>
<path d="M377 585l93 40v70l-93-40z" fill="#7f7b75"/><path d="M470 625h188v70H470z" fill="#aaa49d" /><path d="M658 625l94-40v70l-94 40z" fill="#a39e97"/>
<path d="M407 450v120a157 48 0 0 0 314 0V450z" fill="url(#cp)"/>
<ellipse cx="564" cy="450" rx="157" ry="42" fill="#fbf1e9"/>
<path d="M482 400v55q80 30 163 5v-60z" fill="#aca69f"/>
<path d="M482 400v55l40 13V420z" fill="#8d8983"/>
<ellipse cx="564" cy="400" rx="82" ry="23" fill="#fbf1e9"/>
<path d="M527 260v140q37 16 75 0V260z" fill="url(#st)"/>
<path d="M965 50l20 30 13 40-8 58-25 30c20-60 20-115 0-158z" fill="#5a5853"/>
<path d="M972 55l38-8 30 48-40 5z" fill="#fbf6f0"/><path d="M1000 100l40-5v65l-40 7z" fill="#b4aea7"/><path d="M972 55l28 45v67l-15 11 8-60z" fill="#8d8983"/>
<path d="M172 157L935 37c50 8 60 103 30 171L205 330z" fill="url(#hg)"/>
<ellipse cx="183" cy="245" rx="43" ry="88" transform="rotate(-8 183 245)" fill="#84807a"/>
</g>
</svg>
</div>
</body></html>
